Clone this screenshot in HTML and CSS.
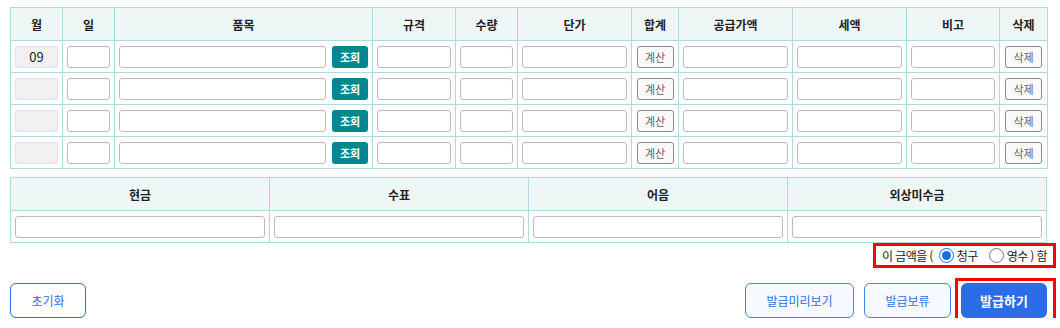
FILE: index.html
```html
<!doctype html>
<html lang="ko">
  <head>
    <meta charset="UTF-8" />
    <meta name="viewport" content="width=device-width, initial-scale=1.0" />
    <title>거래명세서 발급</title>
    <link rel="stylesheet" href="styles.css">
  </head>
  <body>
    <div class="container">
      <table class="item-table">
        <colgroup>
          <col style="width: 52px" />
          <col style="width: 52px" />
          <col style="width: 258px" />
          <col style="width: 83px" />
          <col style="width: 62px" />
          <col style="width: 114px" />
          <col style="width: 47px" />
          <col style="width: 114px" />
          <col style="width: 114px" />
          <col style="width: 93px" />
          <col style="width: 48px" />
        </colgroup>
        <thead>
          <tr>
            <th>월</th>
            <th>일</th>
            <th>품목</th>
            <th>규격</th>
            <th>수량</th>
            <th>단가</th>
            <th>합계</th>
            <th>공급가액</th>
            <th>세액</th>
            <th>비고</th>
            <th>삭제</th>
          </tr>
        </thead>
        <tbody>
          <tr>
            <td><input class="input input-month" type="text" value="09" readonly /></td>
            <td><input class="input" type="text" /></td>
            <td>
              <div class="item-cell">
                <input class="input" type="text" />
                <button type="button" class="btn-search">조회</button>
              </div>
            </td>
            <td><input class="input" type="text" /></td>
            <td><input class="input" type="text" /></td>
            <td><input class="input" type="text" /></td>
            <td><button type="button" class="btn-small">계산</button></td>
            <td><input class="input" type="text" /></td>
            <td><input class="input" type="text" /></td>
            <td><input class="input" type="text" /></td>
            <td><button type="button" class="btn-small">삭제</button></td>
          </tr>
          <tr>
            <td><input class="input input-month" type="text" readonly /></td>
            <td><input class="input" type="text" /></td>
            <td>
              <div class="item-cell">
                <input class="input" type="text" />
                <button type="button" class="btn-search">조회</button>
              </div>
            </td>
            <td><input class="input" type="text" /></td>
            <td><input class="input" type="text" /></td>
            <td><input class="input" type="text" /></td>
            <td><button type="button" class="btn-small">계산</button></td>
            <td><input class="input" type="text" /></td>
            <td><input class="input" type="text" /></td>
            <td><input class="input" type="text" /></td>
            <td><button type="button" class="btn-small">삭제</button></td>
          </tr>
          <tr>
            <td><input class="input input-month" type="text" readonly /></td>
            <td><input class="input" type="text" /></td>
            <td>
              <div class="item-cell">
                <input class="input" type="text" />
                <button type="button" class="btn-search">조회</button>
              </div>
            </td>
            <td><input class="input" type="text" /></td>
            <td><input class="input" type="text" /></td>
            <td><input class="input" type="text" /></td>
            <td><button type="button" class="btn-small">계산</button></td>
            <td><input class="input" type="text" /></td>
            <td><input class="input" type="text" /></td>
            <td><input class="input" type="text" /></td>
            <td><button type="button" class="btn-small">삭제</button></td>
          </tr>
          <tr>
            <td><input class="input input-month" type="text" readonly /></td>
            <td><input class="input" type="text" /></td>
            <td>
              <div class="item-cell">
                <input class="input" type="text" />
                <button type="button" class="btn-search">조회</button>
              </div>
            </td>
            <td><input class="input" type="text" /></td>
            <td><input class="input" type="text" /></td>
            <td><input class="input" type="text" /></td>
            <td><button type="button" class="btn-small">계산</button></td>
            <td><input class="input" type="text" /></td>
            <td><input class="input" type="text" /></td>
            <td><input class="input" type="text" /></td>
            <td><button type="button" class="btn-small">삭제</button></td>
          </tr>
        </tbody>
      </table>

      <table class="pay-table">
        <thead>
          <tr>
            <th>현금</th>
            <th>수표</th>
            <th>어음</th>
            <th>외상미수금</th>
          </tr>
        </thead>
        <tbody>
          <tr>
            <td><input class="input" type="text" /></td>
            <td><input class="input" type="text" /></td>
            <td><input class="input" type="text" /></td>
            <td><input class="input" type="text" /></td>
          </tr>
        </tbody>
      </table>

      <div class="claim-row">
        <div class="mark mark-claim">
          <span>이 금액을 (</span>
          <label class="radio"><input type="radio" name="claim" checked />청구</label>
          <label class="radio"><input type="radio" name="claim" />영수 ) 함</label>
        </div>
      </div>

      <div class="action-row">
        <button type="button" class="btn btn-outline btn-reset">초기화</button>
        <div class="action-right">
          <button type="button" class="btn btn-light btn-preview">발급미리보기</button>
          <button type="button" class="btn btn-light btn-hold">발급보류</button>
          <div class="mark mark-issue">
            <button type="button" class="btn btn-primary btn-issue">발급하기</button>
          </div>
        </div>
      </div>
    </div>
  </body>
</html>
```

FILE: styles.css
```css
* {
  margin: 0;
  padding: 0;
  box-sizing: border-box;
}

body {
  font-family: "Noto Sans CJK KR", "Noto Sans", sans-serif;
  font-size: 12px;
  color: #222;
  background: #fff;
}

.container {
  width: 1037px;
  margin-left: 10px;
  padding-top: 7px;
}

table {
  width: 100%;
  border-collapse: collapse;
  table-layout: fixed;
  border: 1px solid #b2d8db;
}

th,
td {
  border: 1px solid #b2d8db;
  vertical-align: middle;
}

th {
  height: 33px;
  background: #eef7f6;
  font-weight: 700;
  font-size: 12px;
  text-align: center;
  color: #222;
}

td {
  height: 32px;
  padding: 0 4px;
  text-align: center;
}

.input {
  display: block;
  width: 100%;
  height: 22px;
  border: 1px solid #bcbcbc;
  border-radius: 3px;
  background: #fff;
  font-family: inherit;
  font-size: 12px;
  color: #222;
  padding: 0 4px;
  outline: none;
}

.input-month {
  background: #f0f0f0 repeating-linear-gradient(135deg, #f3f3f3 0 2px, #ececec 2px 3px);
  border-color: #e2e2e2;
  text-align: center;
  font-size: 13px;
}

.item-cell {
  display: flex;
  gap: 6px;
  align-items: center;
}

.item-cell .input {
  flex: 1;
}

.btn-search {
  flex: none;
  width: 36px;
  height: 22px;
  border: none;
  border-radius: 3px;
  background: #03878f;
  color: #fff;
  font-family: inherit;
  font-size: 11px;
  font-weight: 700;
  cursor: pointer;
}

.btn-small {
  display: block;
  width: 37px;
  height: 22px;
  margin: 0 auto;
  border: 1px solid #8a8a8a;
  border-radius: 3px;
  background: #fafafa;
  color: #666;
  font-family: inherit;
  font-size: 11px;
  cursor: pointer;
}

.pay-table {
  margin-top: 8px;
}

.claim-row {
  display: flex;
  justify-content: flex-end;
}

.mark {
  border: 3px solid #f00;
}

.mark-claim {
  display: flex;
  align-items: center;
  height: 25px;
  padding: 0 6px;
  margin-right: -9px;
  font-size: 12px;
  letter-spacing: -0.6px;
  color: #222;
}

.radio {
  display: flex;
  align-items: center;
  gap: 3px;
  margin-left: 6px;
}

.radio + .radio {
  margin-left: 11px;
}

.radio input {
  width: 15px;
  height: 15px;
  margin: 0;
  accent-color: #1a6fe0;
}

.action-row {
  display: flex;
  justify-content: space-between;
  align-items: center;
  margin-top: 15px;
}

.action-right {
  display: flex;
  align-items: center;
  gap: 10px;
}

.btn {
  height: 35px;
  border-radius: 6px;
  font-family: inherit;
  font-size: 12px;
  cursor: pointer;
}

.btn-outline {
  background: #fff;
  border: 1px solid #2f6fe4;
  color: #2f6fe4;
}

.btn-reset {
  width: 76px;
}

.btn-light {
  background: #f6f9ff;
  border: 1px solid #4a83ea;
  color: #2f6fe4;
}

.btn-preview {
  width: 109px;
}

.btn-hold {
  width: 87px;
}

.mark-issue {
  padding: 2px 6px 2px 3px;
  margin: -5px -9px -5px -6px;
}

.btn-primary {
  display: block;
  width: 86px;
  background: #2b6de6;
  border: none;
  color: #fff;
  font-weight: 700;
  font-size: 13px;
}
```
